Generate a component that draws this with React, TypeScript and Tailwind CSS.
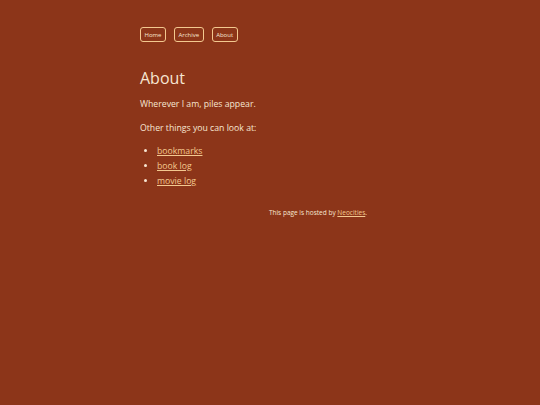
export default function App() {
  const links = ["bookmarks", "book log", "movie log"];
  return (
    <div
      className="min-h-[405px] w-full bg-[#8c3519] text-[#f7e6d2]"
      style={{ fontFamily: '"Open Sans", "Noto Sans", sans-serif' }}
    >
      <div className="mx-auto w-[260px] pt-[27px]">
        {/* Nav */}
        <nav className="flex gap-[8px]">
          {["Home", "Archive", "About"].map((n) => (
            <a
              key={n}
              href="#"
              className="flex h-[15px] items-center rounded-[3px] border border-[#f3c88f] px-[3.5px] text-[6px] leading-none text-[#f7e6d2]"
            >
              {n}
            </a>
          ))}
        </nav>

        {/* Heading */}
        <h1 className="mt-[26px] text-[16px] leading-[20px]">About</h1>

        <p className="mt-[9px] text-[8.7px] leading-[14px]">Wherever I am, piles appear.</p>
        <p className="mt-[10px] text-[8.7px] leading-[14px]">Other things you can look at:</p>

        <ul className="mt-[9px] list-disc pl-[17px] text-[8.7px] leading-[15px] marker:text-[#f7e6d2]">
          {links.map((l) => (
            <li key={l}>
              <a href="#" className="text-[#f3c88f] underline">
                {l}
              </a>
            </li>
          ))}
        </ul>

        {/* Footer */}
        <p className="mt-[19px] pr-[33px] text-right text-[6.5px] leading-[10px]">
          This page is hosted by{" "}
          <a href="#" className="text-[#f3c88f] underline">
            Neocities
          </a>
          .
        </p>
      </div>
    </div>
  );
}
